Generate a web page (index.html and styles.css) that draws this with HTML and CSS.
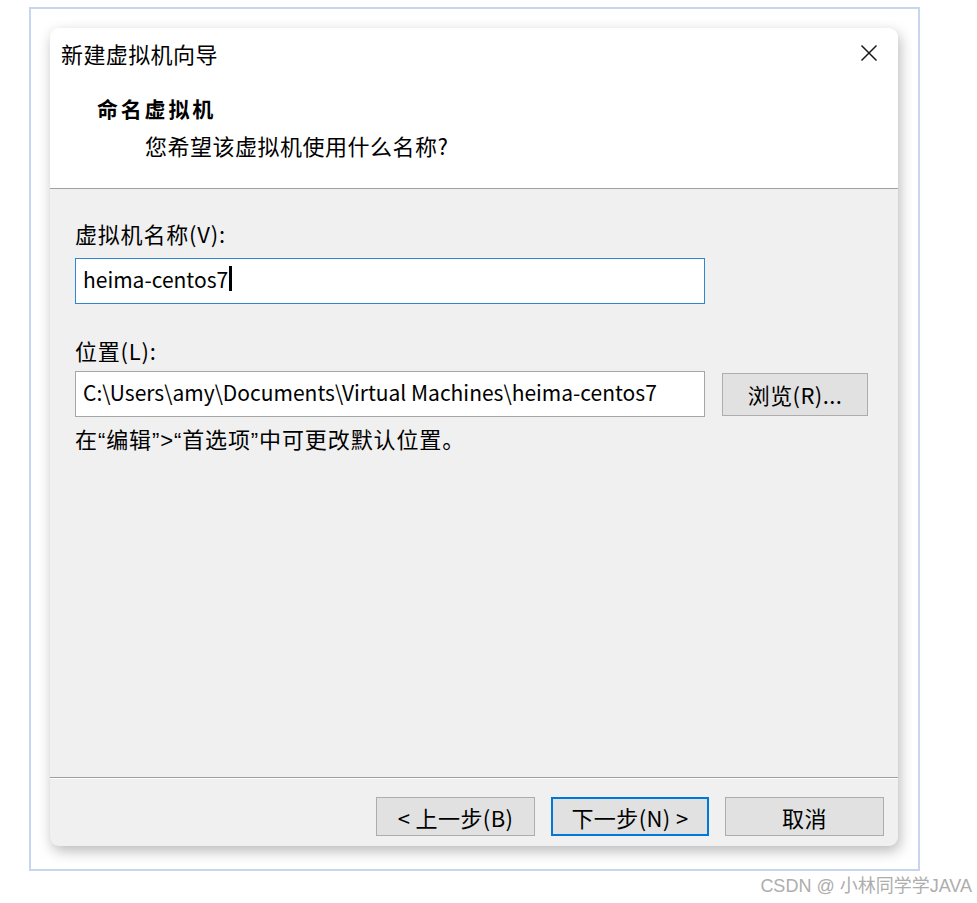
FILE: index.html
```html
<!DOCTYPE html>
<html lang="zh-CN">
<head>
    <meta charset="UTF-8">
    <meta name="viewport" content="width=device-width, initial-scale=1.0">
    <title>新建虚拟机向导</title>
    <link rel="stylesheet" href="styles.css">
</head>
<body>
    <div class="frame">
        <div class="dialog">
            <div class="header">
                <div class="titlebar">
                    <span class="title">新建虚拟机向导</span>
                    <span class="close">
                        <svg width="18" height="18" viewBox="0 0 18 18">
                            <path d="M1.5 1.5 L16.5 16.5 M16.5 1.5 L1.5 16.5" stroke="#1a1a1a" stroke-width="1.5" fill="none"/>
                        </svg>
                    </span>
                </div>
                <div class="heading">命名虚拟机</div>
                <div class="subheading">您希望该虚拟机使用什么名称?</div>
            </div>

            <div class="content">
                <div class="label">虚拟机名称(V):</div>
                <div class="field focused">heima-centos7<span class="caret"></span></div>

                <div class="label second">位置(L):</div>
                <div class="row">
                    <div class="field">C:\Users\amy\Documents\Virtual Machines\heima-centos7</div>
                    <button class="btn browse">浏览(R)...</button>
                </div>
                <p class="hint">在“编辑”&gt;“首选项”中可更改默认位置。</p>
            </div>

            <div class="footer">
                <button class="btn">&lt; 上一步(B)</button>
                <button class="btn default">下一步(N) &gt;</button>
                <button class="btn">取消</button>
            </div>
        </div>
    </div>
    <div class="watermark">CSDN @ 小林同学学JAVA</div>
</body>
</html>
```

FILE: styles.css
```css
* {
    box-sizing: border-box;
}
body {
    margin: 0;
    background: #fff;
    font-family: "Noto Sans CJK SC", sans-serif;
    color: #000;
}
.frame {
    margin: 7px 0 0 29px;
    width: 891px;
    height: 864px;
    border: 2px solid #c9d5ef;
    padding: 19px 20px 0 19px;
}
.dialog {
    width: 848px;
    height: 818px;
    border-radius: 9px;
    background: #f0f0f0;
    box-shadow: 2px 5px 14px rgba(0, 0, 0, 0.28);
    display: flex;
    flex-direction: column;
    overflow: hidden;
}

/* header */
.header {
    background: #fff;
    border-bottom: 1px solid #a0a0a0;
    padding: 10px 0 28px 0;
}
.titlebar {
    display: flex;
    justify-content: space-between;
    align-items: center;
    height: 30px;
    padding: 0 20px 0 11px;
}
.title {
    font-size: 22px;
    line-height: 30px;
    letter-spacing: 0.4px;
}
.close {
    display: flex;
    width: 18px;
    height: 18px;
}
.heading {
    margin: 25px 0 0 47px;
    font-size: 21px;
    line-height: 30px;
    font-weight: bold;
    letter-spacing: 2.8px;
}
.subheading {
    margin: 7px 0 0 95px;
    font-size: 22px;
    line-height: 30px;
    letter-spacing: 0.5px;
}

/* body */
.content {
    flex: 1;
    padding: 29px 0 0 25px;
}
.label {
    font-size: 22px;
    line-height: 30px;
    letter-spacing: 0.8px;
}
.label.second {
    margin-top: 31px;
}
.field {
    width: 630px;
    height: 46px;
    margin-top: 10px;
    background: #fff;
    border: 1px solid #a6a6a6;
    padding: 0 7px 5px 7px;
    font-size: 21px;
    line-height: 38px;
    white-space: nowrap;
    display: flex;
    align-items: center;
}
.field.focused {
    border-color: #2f86d6;
}
.caret {
    display: inline-block;
    width: 3px;
    height: 25px;
    background: #000;
    margin-left: 1px;
}
.row {
    display: flex;
    align-items: center;
    margin-top: 6px;
}
.row .field {
    margin-top: 0;
}
.btn {
    font-family: "Noto Sans CJK SC", sans-serif;
    font-size: 22px;
    color: #000;
    background: #e1e1e1;
    border: 1px solid #adadad;
    width: 159px;
    height: 39px;
    padding: 0;
    letter-spacing: 0.4px;
}
.browse {
    width: 146px;
    height: 43px;
    margin-left: 17px;
}
.hint {
    margin: 9px 0 0 0;
    font-family: "Liberation Sans", "Noto Sans CJK SC", sans-serif;
    font-size: 22px;
    line-height: 30px;
    letter-spacing: 0.9px;
}

/* footer */
.footer {
    border-top: 1px solid #a0a0a0;
    box-shadow: inset 0 1px 0 #fff;
    height: 69px;
    display: flex;
    justify-content: flex-end;
    align-items: flex-start;
    gap: 16px;
    padding: 19px 14px 0 0;
}
.btn.default {
    border: 2px solid #0078d7;
    width: 158px;
}

.watermark {
    text-align: right;
    padding-right: 5px;
    margin-top: 3px;
    font-family: "Liberation Sans", "Noto Sans CJK SC", sans-serif;
    font-size: 18px;
    line-height: 24px;
    color: #adadad;
}
```
